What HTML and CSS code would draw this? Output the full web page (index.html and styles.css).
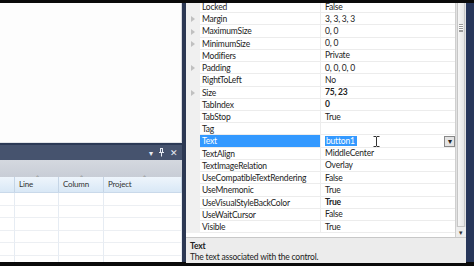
FILE: index.html
```html
<html>
  <head>
    <meta charset="utf-8" />
    <link rel="stylesheet" href="styles.css">
  </head>
  <body>
    <div class="bar-top"></div>
    <div class="main">
      <div class="left">
        <div class="designer"></div>
        <div class="errors">
          <div class="tool-title">
            <span class="tool-icons">
              <span>▾</span>
              <svg width="7" height="9" viewBox="0 0 7 9"><path d="M2 0.5h3M2.5 0.5v4M4.5 0.5v4M1 4.5h5M3.5 4.5v4" stroke="#e8ecf4" stroke-width="1" fill="none"/></svg>
              <span class="x">✕</span>
            </span>
          </div>
          <div class="toolbar"></div>
          <div class="cols">
            <div class="col"></div>
            <div class="col">Line<i class="sort">⌃</i></div>
            <div class="col">Column<i class="sort">⌃</i></div>
            <div class="col">Project<i class="sort">⌃</i></div>
          </div>
          <div class="list">
            <div class="cell"></div><div class="cell"></div><div class="cell"></div><div class="cell"></div>
            <div class="cell"></div><div class="cell"></div><div class="cell"></div><div class="cell"></div>
            <div class="cell"></div><div class="cell"></div><div class="cell"></div><div class="cell"></div>
            <div class="cell"></div><div class="cell"></div><div class="cell"></div><div class="cell"></div>
            <div class="cell"></div><div class="cell"></div><div class="cell"></div><div class="cell"></div>
            <div class="cell"></div><div class="cell"></div><div class="cell"></div><div class="cell"></div>
          </div>
        </div>
      </div>
      <div class="splitter"></div>
      <div class="props">
        <div class="grid-area">
          <div class="rows">
            <div class="row"><div class="mark"></div><div class="name">Locked</div><div class="value">False</div></div>
            <div class="row"><div class="mark"><i class="tri"></i></div><div class="name">Margin</div><div class="value">3, 3, 3, 3</div></div>
            <div class="row"><div class="mark"><i class="tri"></i></div><div class="name">MaximumSize</div><div class="value">0, 0</div></div>
            <div class="row"><div class="mark"><i class="tri"></i></div><div class="name">MinimumSize</div><div class="value">0, 0</div></div>
            <div class="row"><div class="mark"></div><div class="name">Modifiers</div><div class="value">Private</div></div>
            <div class="row"><div class="mark"><i class="tri"></i></div><div class="name">Padding</div><div class="value">0, 0, 0, 0</div></div>
            <div class="row"><div class="mark"></div><div class="name">RightToLeft</div><div class="value">No</div></div>
            <div class="row"><div class="mark"><i class="tri"></i></div><div class="name">Size</div><div class="value bold">75, 23</div></div>
            <div class="row"><div class="mark"></div><div class="name">TabIndex</div><div class="value bold">0</div></div>
            <div class="row"><div class="mark"></div><div class="name">TabStop</div><div class="value">True</div></div>
            <div class="row"><div class="mark"></div><div class="name">Tag</div><div class="value"></div></div>
            <div class="row selected">
              <div class="mark"></div>
              <div class="name">Text</div>
              <div class="value">
                <span class="sel-text">button1</span>
                <svg class="ibeam" width="7" height="11" viewBox="0 0 7 11"><path d="M0.5 0.5h2.5l0.5 0.5l0.5-0.5h2.5M3.5 1v9M0.5 10.5h2.5l0.5-0.5l0.5 0.5h2.5" stroke="#333" stroke-width="1" fill="none"/></svg>
                <span class="drop">▾</span>
              </div>
            </div>
            <div class="row"><div class="mark"></div><div class="name">TextAlign</div><div class="value">MiddleCenter</div></div>
            <div class="row"><div class="mark"></div><div class="name">TextImageRelation</div><div class="value">Overlay</div></div>
            <div class="row"><div class="mark"></div><div class="name">UseCompatibleTextRendering</div><div class="value">False</div></div>
            <div class="row"><div class="mark"></div><div class="name">UseMnemonic</div><div class="value">True</div></div>
            <div class="row"><div class="mark"></div><div class="name">UseVisualStyleBackColor</div><div class="value bold">True</div></div>
            <div class="row"><div class="mark"></div><div class="name">UseWaitCursor</div><div class="value">False</div></div>
            <div class="row"><div class="mark"></div><div class="name">Visible</div><div class="value">True</div></div>
          </div>
          <div class="scroll">
            <div class="thumb"><div class="grip"></div></div>
            <div class="arrow">▾</div>
          </div>
        </div>
        <div class="desc">
          <div class="desc-title">Text</div>
          <div class="desc-text">The text associated with the control.</div>
        </div>
      </div>
      <div class="edge"></div>
    </div>
    <div class="bar-bottom"></div>
  </body>
</html>
```

FILE: styles.css
```css
body {
  margin: 0;
  width: 474px;
  height: 266px;
  overflow: hidden;
  background: #000;
  font-family: Lato, "Noto Sans", sans-serif;
  font-size: 8.5px;
  letter-spacing: -0.2px;
  color: #222;
}

.bar-top {
  height: 3px;
  background: #0a0a0a;
}

.bar-bottom {
  height: 4px;
  background: #0a0a0a;
}

.main {
  display: flex;
  height: 259px;
}

/* left side: designer + error list */
.left {
  width: 182px;
  display: flex;
  flex-direction: column;
  background: #2c3a56;
}

.designer {
  height: 140px;
  flex-shrink: 0;
  background: #fdfdfd;
  border-right: 1px solid #d8dbe2;
  border-bottom: 1px solid #e2e4e8;
  box-sizing: border-box;
}

.errors {
  margin-top: 2px;
  flex: 1;
  min-height: 0;
  display: flex;
  flex-direction: column;
  overflow: hidden;
}

.tool-title {
  height: 15px;
  flex-shrink: 0;
  background: #46536e;
  display: flex;
  justify-content: flex-end;
  align-items: center;
  padding-right: 4px;
}

.tool-icons {
  display: flex;
  align-items: center;
  gap: 5px;
  color: #e8ecf4;
  font-size: 8px;
}

.tool-icons .x {
  font-size: 9px;
}

.toolbar {
  height: 17px;
  flex-shrink: 0;
  background: linear-gradient(#d4d8df, #c8cdd6);
}

.cols {
  height: 15px;
  flex-shrink: 0;
  display: grid;
  grid-template-columns: 15px 44px 45px 1fr;
  background: linear-gradient(#eef5fc, #d9e8f6);
  border-bottom: 1px solid #c9d9ea;
}

.col {
  position: relative;
  border-right: 1px solid #c5d5e6;
  padding-left: 4px;
  line-height: 15px;
  font-size: 8px;
  color: #333;
}

.sort {
  position: absolute;
  top: -3px;
  left: 20px;
  font-style: normal;
  font-size: 6px;
  line-height: 8px;
  color: #888;
}

.col:nth-child(4) .sort {
  left: 38px;
}

.list {
  flex: 1;
  min-height: 0;
  overflow: hidden;
  display: grid;
  grid-template-columns: 15px 44px 45px 1fr;
  grid-auto-rows: 12.6px;
  background: #fff;
}

.cell {
  border-right: 1px solid #e6ecf3;
  border-bottom: 1px solid #eceff3;
}

.splitter {
  width: 4px;
  background: #2c3853;
}

/* property grid */
.props {
  width: 280px;
  display: flex;
  flex-direction: column;
  background: #f0f0f0;
}

.grid-area {
  height: 234px;
  flex-shrink: 0;
  display: flex;
  overflow: hidden;
  border-bottom: 1px solid #c8c8c8;
}

.rows {
  width: 270px;
  margin-top: -2px;
  background: #fff;
}

.row {
  display: flex;
  height: 12.22px;
  line-height: 12px;
}

.mark {
  width: 14px;
  background: #f0f0f0;
  display: flex;
  align-items: center;
  justify-content: center;
}

.tri {
  width: 0;
  height: 0;
  border-top: 3px solid transparent;
  border-bottom: 3px solid transparent;
  border-left: 4px solid #c0c0c0;
}

.name {
  width: 118px;
  padding-left: 2px;
  border-right: 1px solid #ececec;
  border-bottom: 1px solid #ececec;
  white-space: nowrap;
  overflow: hidden;
}

.value {
  flex: 1;
  padding-left: 4px;
  border-bottom: 1px solid #ececec;
  display: flex;
  align-items: center;
  white-space: nowrap;
}

.bold {
  font-weight: bold;
}

.selected .name {
  background: #3399ff;
  color: #fff;
}

.sel-text {
  background: #3399ff;
  color: #fff;
  line-height: 10px;
  padding: 0 2px 0 1px;
}

.ibeam {
  margin-left: 16px;
}

.drop {
  margin-left: auto;
  width: 9px;
  height: 9px;
  border: 1px solid #888;
  background: #e4e4e4;
  font-size: 8px;
  line-height: 9px;
  text-align: center;
  color: #222;
}

.scroll {
  width: 10px;
  display: flex;
  flex-direction: column;
  background: #e2e2e2;
  border-left: 1px solid #cfcfcf;
}

.thumb {
  flex: 1;
  margin: 0 1px;
  background: linear-gradient(90deg, #f6f6f6, #e6e6e6);
  border: 1px solid #c6c6c6;
  border-top: none;
}

.grip {
  margin: 21px auto 0;
  width: 4px;
  height: 6px;
  border-top: 1px solid #999;
  border-bottom: 1px solid #999;
  background: repeating-linear-gradient(#fff 0 1px, #999 1px 2px);
}

.arrow {
  height: 10px;
  font-size: 7px;
  line-height: 10px;
  text-align: center;
  color: #333;
  background: #ededed;
}

.desc {
  flex: 1;
  padding: 3px 4px 0;
  background: #ececec;
}

.desc-title {
  font-weight: bold;
  line-height: 11px;
}

.desc-text {
  line-height: 11px;
}

.edge {
  flex: 1;
  background: #27365a;
}
```
